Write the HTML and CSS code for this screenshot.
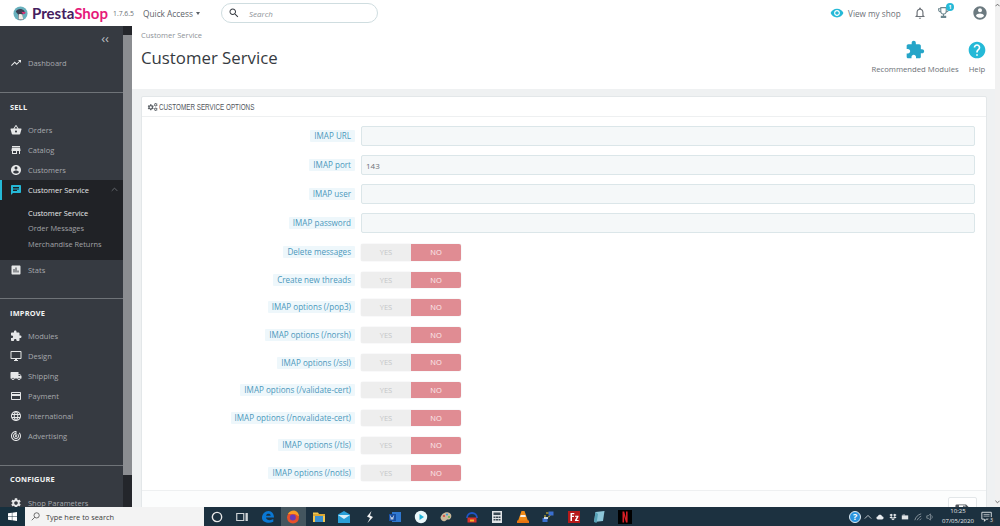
FILE: index.html
```html
<!DOCTYPE html>
<html lang="en">
<head>
<meta charset="utf-8">
<title>Customer Service</title>
<link rel="stylesheet" href="styles.css">
</head>
<body>
<svg class="defs" aria-hidden="true">
  <symbol id="i-trend" viewBox="0 0 24 24"><path d="M16 6l2.29 2.29-4.88 4.88-4-4L2 16.59 3.41 18l6-6 4 4 6.3-6.29L22 12V6z"/></symbol>
  <symbol id="i-basket" viewBox="0 0 24 24"><path d="M17.21 9l-4.38-6.56c-.19-.28-.51-.42-.83-.42-.32 0-.64.14-.83.43L6.79 9H2c-.55 0-1 .45-1 1 0 .09.01.18.04.27l2.54 9.27c.23.84 1 1.46 1.92 1.46h13c.92 0 1.69-.62 1.93-1.46l2.54-9.27L23 10c0-.55-.45-1-1-1h-4.79zM9 9l3-4.4L15 9H9zm3 8c-1.1 0-2-.9-2-2s.9-2 2-2 2 .9 2 2-.9 2-2 2z"/></symbol>
  <symbol id="i-store" viewBox="0 0 24 24"><path d="M20 4H4v2h16V4zm1 10v-2l-1-5H4l-1 5v2h1v6h10v-6h4v6h2v-6h1zm-9 4H6v-4h6v4z"/></symbol>
  <symbol id="i-account" viewBox="0 0 24 24"><path d="M12 2C6.48 2 2 6.48 2 12s4.48 10 10 10 10-4.48 10-10S17.52 2 12 2zm0 3c1.66 0 3 1.34 3 3s-1.34 3-3 3-3-1.34-3-3 1.34-3 3-3zm0 14.2c-2.5 0-4.71-1.28-6-3.22.03-1.99 4-3.08 6-3.08 1.99 0 5.97 1.09 6 3.08-1.29 1.94-3.5 3.22-6 3.22z"/></symbol>
  <symbol id="i-chat" viewBox="0 0 24 24"><path d="M20 2H4c-1.1 0-1.99.9-1.99 2L2 22l4-4h14c1.1 0 2-.9 2-2V4c0-1.1-.9-2-2-2zM6 9h12v2H6V9zm8 5H6v-2h8v2zm4-6H6V6h12v2z"/></symbol>
  <symbol id="i-stats" viewBox="0 0 24 24"><path d="M19 3H5c-1.1 0-2 .9-2 2v14c0 1.1.9 2 2 2h14c1.1 0 2-.9 2-2V5c0-1.1-.9-2-2-2zM9 17H7v-7h2v7zm4 0h-2V7h2v10zm4 0h-2v-4h2v4z"/></symbol>
  <symbol id="i-puzzle" viewBox="0 0 24 24"><path d="M20.5 11H19V7c0-1.1-.9-2-2-2h-4V3.5C13 2.12 11.88 1 10.5 1S8 2.12 8 3.5V5H4c-1.1 0-1.99.9-1.99 2v3.8H3.5c1.49 0 2.7 1.21 2.7 2.7s-1.21 2.7-2.7 2.7H2V20c0 1.1.9 2 2 2h3.8v-1.5c0-1.49 1.21-2.7 2.7-2.7 1.49 0 2.7 1.21 2.7 2.7V22H17c1.1 0 2-.9 2-2v-4h1.5c1.38 0 2.5-1.12 2.5-2.5S21.88 11 20.5 11z"/></symbol>
  <symbol id="i-desktop" viewBox="0 0 24 24"><path d="M21 2H3c-1.1 0-2 .9-2 2v12c0 1.1.9 2 2 2h7v2H8v2h8v-2h-2v-2h7c1.1 0 2-.9 2-2V4c0-1.1-.9-2-2-2zm0 14H3V4h18v12z"/></symbol>
  <symbol id="i-truck" viewBox="0 0 24 24"><path d="M20 8h-3V4H3c-1.1 0-2 .9-2 2v11h2c0 1.66 1.34 3 3 3s3-1.34 3-3h6c0 1.66 1.34 3 3 3s3-1.34 3-3h2v-5l-3-4zM6 18.5c-.83 0-1.5-.67-1.5-1.5s.67-1.5 1.5-1.5 1.5.67 1.5 1.5-.67 1.5-1.5 1.5zm13.5-9l1.96 2.5H17V9.5h2.5zm-1.5 9c-.83 0-1.5-.67-1.5-1.5s.67-1.5 1.5-1.5 1.5.67 1.5 1.5-.67 1.5-1.5 1.5z"/></symbol>
  <symbol id="i-card" viewBox="0 0 24 24"><path d="M20 4H4c-1.11 0-1.99.89-1.99 2L2 18c0 1.11.89 2 2 2h16c1.11 0 2-.89 2-2V6c0-1.11-.89-2-2-2zm0 14H4v-6h16v6zm0-10H4V6h16v2z"/></symbol>
  <symbol id="i-globe" viewBox="0 0 24 24"><path d="M11.99 2C6.47 2 2 6.48 2 12s4.47 10 9.99 10C17.52 22 22 17.52 22 12S17.52 2 11.99 2zm6.93 6h-2.95c-.32-1.25-.78-2.45-1.38-3.56 1.84.63 3.37 1.91 4.33 3.56zM12 4.04c.83 1.2 1.48 2.53 1.91 3.96h-3.82c.43-1.43 1.08-2.76 1.91-3.96zM4.26 14C4.1 13.36 4 12.69 4 12s.1-1.36.26-2h3.38c-.08.66-.14 1.32-.14 2 0 .68.06 1.34.14 2H4.26zm.82 2h2.95c.32 1.25.78 2.45 1.38 3.56-1.84-.63-3.37-1.9-4.33-3.56zm2.95-8H5.08c.96-1.66 2.49-2.93 4.33-3.56C8.81 5.55 8.35 6.75 8.03 8zM12 19.96c-.83-1.2-1.48-2.53-1.91-3.96h3.82c-.43 1.43-1.08 2.76-1.91 3.96zM14.34 14H9.66c-.09-.66-.16-1.32-.16-2 0-.68.07-1.35.16-2h4.68c.09.65.16 1.32.16 2 0 .68-.07 1.34-.16 2zm.25 5.56c.6-1.11 1.06-2.31 1.38-3.56h2.95c-.96 1.65-2.49 2.93-4.33 3.56zM16.36 14c.08-.66.14-1.32.14-2 0-.68-.06-1.34-.14-2h3.38c.16.64.26 1.31.26 2s-.1 1.36-.26 2h-3.38z"/></symbol>
  <symbol id="i-target" viewBox="0 0 24 24"><path d="M19.07 4.93l-1.41 1.41C19.1 7.79 20 9.79 20 12c0 4.42-3.58 8-8 8s-8-3.58-8-8c0-4.08 3.05-7.44 7-7.93v2.02C8.16 6.57 6 9.03 6 12c0 3.31 2.69 6 6 6s6-2.69 6-6c0-1.66-.67-3.16-1.76-4.24l-1.41 1.41C15.55 9.9 16 10.9 16 12c0 2.21-1.79 4-4 4s-4-1.79-4-4c0-1.86 1.28-3.41 3-3.86v2.14c-.6.35-1 .98-1 1.72 0 1.1.9 2 2 2s2-.9 2-2c0-.74-.4-1.38-1-1.72V2h-1C6.48 2 2 6.48 2 12s4.48 10 10 10 10-4.48 10-10c0-2.76-1.12-5.26-2.93-7.07z"/></symbol>
  <symbol id="i-gear" viewBox="0 0 24 24"><path d="M19.14 12.94c.04-.3.06-.61.06-.94 0-.32-.02-.64-.07-.94l2.03-1.58c.18-.14.23-.41.12-.61l-1.92-3.32c-.12-.22-.37-.29-.59-.22l-2.39.96c-.5-.38-1.03-.7-1.62-.94l-.36-2.54c-.04-.24-.24-.41-.48-.41h-3.84c-.24 0-.43.17-.47.41l-.36 2.54c-.59.24-1.13.57-1.62.94l-2.39-.96c-.22-.08-.47 0-.59.22L2.74 8.87c-.12.21-.08.47.12.61l2.03 1.58c-.05.3-.09.63-.09.94s.02.64.07.94l-2.03 1.58c-.18.14-.23.41-.12.61l1.92 3.32c.12.22.37.29.59.22l2.39-.96c.5.38 1.03.7 1.62.94l.36 2.54c.05.24.24.41.48.41h3.84c.24 0 .44-.17.47-.41l.36-2.54c.59-.24 1.13-.56 1.62-.94l2.39.96c.22.08.47 0 .59-.22l1.92-3.32c.12-.22.07-.47-.12-.61l-2.01-1.58zM12 15.6c-1.98 0-3.6-1.62-3.6-3.6s1.62-3.6 3.6-3.6 3.6 1.62 3.6 3.6-1.62 3.6-3.6 3.6z"/></symbol>
  <symbol id="i-eye" viewBox="0 0 24 24"><path d="M12 4.5C7 4.5 2.73 7.61 1 12c1.73 4.39 6 7.5 11 7.5s9.27-3.11 11-7.5c-1.73-4.39-6-7.5-11-7.5zM12 17c-2.76 0-5-2.24-5-5s2.24-5 5-5 5 2.24 5 5-2.24 5-5 5zm0-8c-1.66 0-3 1.34-3 3s1.34 3 3 3 3-1.34 3-3-1.34-3-3-3z"/></symbol>
  <symbol id="i-bell" viewBox="0 0 24 24"><path d="M12 22c1.1 0 2-.9 2-2h-4c0 1.1.9 2 2 2zm6-6v-5c0-3.07-1.63-5.64-4.5-6.32V4c0-.83-.67-1.5-1.5-1.5s-1.5.67-1.5 1.5v.68C7.64 5.36 6 7.92 6 11v5l-2 2v1h16v-1l-2-2zm-2 1H8v-6c0-2.48 1.51-4.5 4-4.5s4 2.02 4 4.5v6z"/></symbol>
  <symbol id="i-help" viewBox="0 0 24 24"><path d="M12 2C6.48 2 2 6.48 2 12s4.48 10 10 10 10-4.48 10-10S17.52 2 12 2zm1 17h-2v-2h2v2zm2.07-7.75l-.9.92C13.45 12.9 13 13.5 13 15h-2v-.5c0-1.1.45-2.1 1.17-2.83l1.24-1.26c.37-.36.59-.86.59-1.41 0-1.1-.9-2-2-2s-2 .9-2 2H8c0-2.21 1.79-4 4-4s4 1.79 4 4c0 .88-.36 1.68-.93 2.25z"/></symbol>
  <symbol id="i-search" viewBox="0 0 24 24"><path d="M15.5 14h-.79l-.28-.27C15.41 12.59 16 11.11 16 9.5 16 5.91 13.09 3 9.5 3S3 5.91 3 9.5 5.91 16 9.5 16c1.61 0 3.09-.59 4.23-1.57l.27.28v.79l5 4.99L20.49 19l-4.99-5zm-6 0C7.01 14 5 11.99 5 9.5S7.01 5 9.5 5 14 7.01 14 9.5 11.99 14 9.5 14z"/></symbol>
  <symbol id="i-trophy" viewBox="0 0 24 24"><path d="M6 2h12v2h4v3c0 2.5-1.8 4.5-4.3 4.9A6 6 0 0 1 13 15.9V18h4v4H7v-4h4v-2.100A6 6 0 0 1 6.300 11.900C3.800 11.500 2 9.500 2 7V4h4zM4 6v1c0 1.300.8 2.400 2 2.800V6zm14 0v3.800c1.200-.4 2-1.500 2-2.800V6zM8 4v6a4 4 0 0 0 8 0V4z"/></symbol>
</svg>

<div class="screen">
  <div class="window">
    <div class="window-body">
      <header class="topbar">
        <div class="logo">
          <svg class="logo-mark" viewBox="0 0 16 16"><circle cx="8" cy="8" r="7.500" fill="#68b0bd"/><path d="M3 6c1-3 6-4 9-1l1 3-3 .5 1 6.500H6L5.500 9z" fill="#3c3f52"/><path d="M9 6l5 1-3 2z" fill="#ea2d78"/><path d="M6 9c1.500-1 3-.5 4 0l1 5.500H6z" fill="#f2ede6"/></svg>
          <span class="logo-text"><span class="logo-a">Presta</span><span class="logo-b">Shop</span></span>
        </div>
        <span class="version">1.7.6.5</span>
        <span class="quick">Quick Access<span class="caret"></span></span>
        <div class="searchbox">
          <svg class="ic-search"><use href="#i-search"/></svg>
          <span class="search-ph">Search</span>
        </div>
        <div class="top-right">
          <svg class="ic-eye"><use href="#i-eye"/></svg>
          <span class="view-shop">View my shop</span>
          <svg class="ic-bell"><use href="#i-bell"/></svg>
          <span class="trophy"><svg class="ic-trophy"><use href="#i-trophy"/></svg><span class="badge">1</span></span>
          <svg class="ic-user"><use href="#i-account"/></svg>
        </div>
      </header>
      <div class="below">
        <nav class="sidebar">
          <div class="collapse">&#8249;&#8249;</div>
          <a class="item"><svg class="ic"><use href="#i-trend"/></svg>Dashboard</a>
          <div class="section">
            <div class="section-title">SELL</div>
            <a class="item"><svg class="ic"><use href="#i-basket"/></svg>Orders</a>
            <a class="item"><svg class="ic"><use href="#i-store"/></svg>Catalog</a>
            <a class="item"><svg class="ic"><use href="#i-account"/></svg>Customers</a>
            <div class="open-group">
              <a class="item item-active"><svg class="ic"><use href="#i-chat"/></svg>Customer Service<svg class="chev" viewBox="0 0 10 6"><path d="M1 5l4-4 4 4" fill="none" stroke="currentColor" stroke-width="1.200"/></svg></a>
              <a class="sub sub-on">Customer Service</a>
              <a class="sub">Order Messages</a>
              <a class="sub">Merchandise Returns</a>
            </div>
            <a class="item"><svg class="ic"><use href="#i-stats"/></svg>Stats</a>
          </div>
          <div class="section">
            <div class="section-title">IMPROVE</div>
            <a class="item"><svg class="ic"><use href="#i-puzzle"/></svg>Modules</a>
            <a class="item"><svg class="ic"><use href="#i-desktop"/></svg>Design</a>
            <a class="item"><svg class="ic"><use href="#i-truck"/></svg>Shipping</a>
            <a class="item"><svg class="ic"><use href="#i-card"/></svg>Payment</a>
            <a class="item"><svg class="ic"><use href="#i-globe"/></svg>International</a>
            <a class="item"><svg class="ic"><use href="#i-target"/></svg>Advertising</a>
          </div>
          <div class="section">
            <div class="section-title">CONFIGURE</div>
            <a class="item"><svg class="ic"><use href="#i-gear"/></svg>Shop Parameters</a>
          </div>
        </nav>
        <div class="side-scroll"><div class="side-thumb"></div></div>
        <main class="main">
          <div class="page-head">
            <div class="page-title-wrap">
              <div class="crumb">Customer Service</div>
              <h1 class="title">Customer Service</h1>
            </div>
            <div class="toolbar">
              <a class="tool tool-rec"><svg class="ic-tool"><use href="#i-puzzle"/></svg><span>Recommended Modules</span></a>
              <a class="tool tool-help"><svg class="ic-tool ic-tool-help"><use href="#i-help"/></svg><span>Help</span></a>
            </div>
          </div>
          <section class="card">
            <div class="card-head">
              <svg class="ic-cogs" viewBox="0 0 24 18"><use href="#i-gear" x="0" y="2" width="15" height="15"/><use href="#i-gear" x="13" y="0" width="9" height="9"/><use href="#i-gear" x="13" y="9" width="9" height="9"/></svg>
              <span class="card-title">CUSTOMER SERVICE OPTIONS</span>
            </div>
            <div class="form">
              <div class="row row-input"><label class="lab"><span>IMAP URL</span></label><input class="inp" type="text"></div>
              <div class="row row-input"><label class="lab"><span>IMAP port</span></label><input class="inp" type="text" value="143"></div>
              <div class="row row-input"><label class="lab"><span>IMAP user</span></label><input class="inp" type="text"></div>
              <div class="row row-input"><label class="lab"><span>IMAP password</span></label><input class="inp" type="text"></div>
              <div class="row row-switch"><label class="lab"><span>Delete messages</span></label><div class="switch"><span class="yes">YES</span><span class="no">NO</span></div></div>
              <div class="row row-switch"><label class="lab"><span>Create new threads</span></label><div class="switch"><span class="yes">YES</span><span class="no">NO</span></div></div>
              <div class="row row-switch"><label class="lab"><span>IMAP options (/pop3)</span></label><div class="switch"><span class="yes">YES</span><span class="no">NO</span></div></div>
              <div class="row row-switch"><label class="lab"><span>IMAP options (/norsh)</span></label><div class="switch"><span class="yes">YES</span><span class="no">NO</span></div></div>
              <div class="row row-switch"><label class="lab"><span>IMAP options (/ssl)</span></label><div class="switch"><span class="yes">YES</span><span class="no">NO</span></div></div>
              <div class="row row-switch"><label class="lab"><span>IMAP options (/validate-cert)</span></label><div class="switch"><span class="yes">YES</span><span class="no">NO</span></div></div>
              <div class="row row-switch"><label class="lab"><span>IMAP options (/novalidate-cert)</span></label><div class="switch"><span class="yes">YES</span><span class="no">NO</span></div></div>
              <div class="row row-switch"><label class="lab"><span>IMAP options (/tls)</span></label><div class="switch"><span class="yes">YES</span><span class="no">NO</span></div></div>
              <div class="row row-switch"><label class="lab"><span>IMAP options (/notls)</span></label><div class="switch"><span class="yes">YES</span><span class="no">NO</span></div></div>
            </div>
            <div class="card-foot">
              <div class="save"><svg class="ic-save" viewBox="0 0 24 24"><path d="M4 2h13l5 5v15H2V4a2 2 0 0 1 2-2zm3 1v6h9V3zm6 1h2v4h-2z"/></svg></div>
            </div>
          </section>
        </main>
      </div>
    </div>
    <div class="page-scroll"><svg class="page-up" viewBox="0 0 6 4"><path d="M.5 3.500L3 1l2.500 2.500" fill="none" stroke="#555"/></svg><svg class="page-down" viewBox="0 0 6 4"><path d="M.5.5L3 3 5.500.5" fill="none" stroke="#555"/></svg></div>
  </div>

  <footer class="taskbar">
    <div class="start"><svg class="win" viewBox="0 0 10 10"><path d="M0 1.400L4.300.8v3.900H0zM4.800.7L10 0v4.700H4.800zM0 5.200h4.300v3.900L0 8.500zM4.800 5.200H10V10l-5.200-.7z" fill="#fff"/></svg></div>
    <div class="ts-search"><svg class="ts-lens" viewBox="0 0 12 12"><circle cx="7.500" cy="4.500" r="3.500" fill="none" stroke="#444"/><path d="M5 7l-4 4" stroke="#444"/></svg><span>Type here to search</span></div>
    <div class="apps">
      <span class="app"><svg viewBox="0 0 12 12"><circle cx="6" cy="6" r="4" fill="none" stroke="#e8e8e8" stroke-width="1.200"/></svg></span>
      <span class="app"><svg viewBox="0 0 12 12"><path d="M1.500 3h6v6h-6zM9.500 3h1v2.500h-1zM9.500 6.500h1V9h-1z" fill="none" stroke="#d0d5d8"/></svg></span>
      <span class="app"><svg viewBox="0 0 14 14"><path d="M1 8c0-4 3-7 6.500-7S13 4 13 7.500H5c.2 2.800 4.500 3.500 7.300 1.500v2.800C8 14 1 12.500 1 8zm4.100-2.300h4.600C9.500 3.200 5.500 3.200 5.100 5.700z" fill="#0a78d4"/></svg></span>
      <span class="app app-on"><svg viewBox="0 0 14 14"><circle cx="7" cy="7.500" r="6" fill="#e8502a"/><path d="M2 4c1-2 3-3.500 6-3.500 3 .5 5 3 5 6L9 4z" fill="#fb9a22"/><circle cx="6.800" cy="7.500" r="3" fill="#6a3bb8"/></svg></span>
      <span class="app"><svg viewBox="0 0 14 14"><path d="M1 2.500h5l1 1.500h6v8H1z" fill="#f2c54c"/><path d="M3 6h8v6H3z" fill="#3a8fd0"/><path d="M1 4h12v2H1z" fill="#dba735"/></svg></span>
      <span class="app"><svg viewBox="0 0 14 14"><path d="M1 4.500L7 1l6 3.500V13H1z" fill="#2a9fd8"/><path d="M1 5l6 4 6-4" fill="#d8eef8"/></svg></span>
      <span class="app"><svg viewBox="0 0 14 14"><path d="M8.500 1L4 6.500l3 1.500-2.500 5L10 7 7 5.500z" fill="#f2f2f2"/></svg></span>
      <span class="app"><svg viewBox="0 0 14 14"><path d="M4 2h9v10H4z" fill="#2f78d0"/><path d="M1 4h7v7H1z" fill="#174ea0"/><path d="M2.300 5.500l.9 4 .8-2.500.8 2.500.9-4" fill="none" stroke="#fff" stroke-width=".6"/></svg></span>
      <span class="app"><svg viewBox="0 0 14 14"><circle cx="7" cy="7" r="6.200" fill="#eaf8fb"/><path d="M5.500 4l4.500 3-4.500 3z" fill="#1fb3d8"/></svg></span>
      <span class="app"><svg viewBox="0 0 14 14"><path d="M1.500 8C2 4 6 1.500 9.500 2.500s3.500 5 1.500 6.500-2-.5-3.500 1S3 12.500 1.500 8z" fill="#c9b89a"/><circle cx="5" cy="6" r="1.100" fill="#d9443a"/><circle cx="8" cy="4.500" r="1.100" fill="#3a9ad9"/><circle cx="10" cy="7" r="1" fill="#5db84a"/></svg></span>
      <span class="app"><svg viewBox="0 0 14 14"><path d="M2 8a5 5 0 0 1 10 0" fill="none" stroke="#1f55c8" stroke-width="1.800"/><path d="M2.500 7.500h9v5h-9z" fill="#d8322c"/><path d="M5 9.500h4v2H5z" fill="#f2b72c"/></svg></span>
      <span class="app"><svg viewBox="0 0 12 14"><rect x="1" y="1" width="10" height="12" fill="#dfe3e6"/><rect x="2.500" y="2.500" width="7" height="2.500" fill="#3a4a55"/><path d="M2.500 6.500h2v1.500h-2zM5 6.500h2v1.500H5zM7.500 6.500h2v1.500h-2zM2.500 9h2v1.500h-2zM5 9h2v1.500H5zM7.500 9h2v1.500h-2z" fill="#3a4a55"/></svg></span>
      <span class="app"><svg viewBox="0 0 14 14"><path d="M5.500 1h3l3.500 10H2z" fill="#f08a16"/><path d="M4.700 5h4.600l.6 2H4.100z" fill="#f6f1e8"/><path d="M1 10.500h12V13H1z" fill="#e8730f"/></svg></span>
      <span class="app"><svg viewBox="0 0 14 14"><path d="M7.500 1.500h5v4h-5zM1.500 8h5v4h-5z" fill="#3a6fd0"/><path d="M5 3h2.500M4 5v3M9 5.500l-2 2" stroke="#e8c52c"/><path d="M3 7h4v2H3z" fill="#c8d8ea"/></svg></span>
      <span class="app"><svg viewBox="0 0 14 14"><rect x="1" y="1" width="12" height="12" fill="#b61a1a"/><path d="M3.500 3h3.800v1.300H5v1.500h2v1.300H5V11H3.500zM8 5.800h3.500v1L9.700 10h1.900v1H8v-1l1.800-3.200H8z" fill="#fff"/></svg></span>
      <span class="app"><svg viewBox="0 0 14 14"><path d="M3.500 2l9-1-1.500 10-9 1z" fill="#8cc6d8"/><path d="M3.500 2L6 4l-1.500 9-2.500-1z" fill="#55a0b5"/></svg></span>
      <span class="app"><svg viewBox="0 0 14 14"><rect width="14" height="14" fill="#000"/><path d="M4.500 1.500h1.700L8 8V1.500h1.600v11H8L6.100 6v6.500H4.500z" fill="#d81f26"/></svg></span>
    </div>
    <div class="tray">
      <span class="tray-help">?</span>
      <svg class="tray-ic" viewBox="0 0 10 10"><path d="M1 7l4-4 4 4" fill="none" stroke="#dfe3e6"/></svg>
      <svg class="tray-ic" viewBox="0 0 10 10"><path d="M2.500 8a2 2 0 0 1 0-4c.5-2 4-2.500 5 0a2 2 0 0 1 0 4z" fill="#e8ecef"/></svg>
      <svg class="tray-ic" viewBox="0 0 10 10"><path d="M2.800 1L5 2.500 2.800 4 .5 2.500zM7.200 1l2.300 1.500L7.200 4 5 2.500zM2.800 4L5 5.500 2.800 7 .5 5.500zM7.200 4l2.300 1.500L7.200 7 5 5.500zM2.800 7.500L5 6.500l2.200 1L5 9z" fill="#e8ecef"/></svg>
      <svg class="tray-ic" viewBox="0 0 10 10"><path d="M1 3h8v5H1z" fill="#dfe3e6"/><path d="M2 2h3v1H2z" fill="#dfe3e6"/></svg>
      <svg class="tray-ic" viewBox="0 0 10 10"><path d="M1 9c1-4 4-7 8-8M4 9c1-2 2.500-4 5-5M7 9l2-2" fill="none" stroke="#9aa5ac"/></svg>
      <svg class="tray-ic" viewBox="0 0 10 10"><path d="M1 3.500h2L5.500 1v8L3 6.500H1zM7 3c1 1 1 3 0 4" fill="none" stroke="#aab3b9" stroke-width=".8"/></svg>
      <div class="clock"><span>10:25</span><span>07/05/2020</span></div>
      <span class="notif"><svg viewBox="0 0 14 13"><path d="M1 1h11v8H6l-2 2.500V9H1z" fill="none" stroke="#f0f2f3"/><path d="M3 3.500h7M3 5.500h7" stroke="#f0f2f3" stroke-width=".7"/></svg><span class="notif-n">3</span></span>
    </div>
  </footer>
</div>
</body>
</html>
```
FILE: styles.css
```css
* { box-sizing: border-box; }
html, body { margin: 0; padding: 0; height: 100%; overflow: hidden; background: #fff; }
body { font-family: "Open Sans", "Noto Sans", sans-serif; color: #363a41; }
.defs { display: none; }
a { display: block; }

.screen { width: 1000px; height: 526px; display: flex; flex-direction: column; overflow: hidden; }
.window { flex: 1; min-height: 0; display: flex; }
.window-body { flex: 1; min-width: 0; display: flex; flex-direction: column; }

/* Top bar */
.topbar { height: 26px; flex: none; display: flex; align-items: center; background: #fff; }
.logo { width: 113px; flex: none; display: flex; align-items: center; padding-left: 13px; }
.logo-mark { width: 15px; height: 15px; flex: none; }
.logo-text { margin-left: 4px; font-family: Lato, sans-serif; font-weight: 700; font-size: 15px; line-height: 1; white-space: nowrap; }
.logo-a { color: #45205f; }
.logo-b { color: #e6197a; }
.version { width: 30px; flex: none; font-size: 6.800px; color: #6c7177; }
.quick { font-size: 8.300px; color: #5c6168; display: flex; align-items: center; width: 78px; flex: none; white-space: nowrap; }
.caret { margin-left: 3px; border: 2.500px solid transparent; border-top: 3px solid #5c6168; border-bottom: 0; }
.searchbox { width: 157px; height: 20px; border: 1px solid #cfdde0; border-radius: 10px; display: flex; align-items: center; padding-left: 6px; }
.ic-search { width: 12px; height: 12px; fill: #363a41; }
.search-ph { margin-left: 9px; font-size: 8px; font-style: italic; color: #8d9297; }
.top-right { margin-left: auto; display: flex; align-items: center; }
.ic-eye { width: 14px; height: 14px; fill: #25b9d7; }
.view-shop { margin-left: 4px; font-size: 8.200px; color: #6c7177; width: 65px; white-space: nowrap; }
.ic-bell { width: 14px; height: 14px; fill: #6c7177; }
.trophy { position: relative; display: block; width: 14px; height: 14px; margin-left: 10px; }
.ic-trophy { width: 13px; height: 13px; fill: #6c868e; display: block; }
.badge { position: absolute; top: -3px; right: -3px; width: 8px; height: 8px; border-radius: 50%; background: #25b9d7; color: #fff; font-size: 5.500px; line-height: 8px; text-align: center; font-weight: 700; }
.ic-user { width: 16px; height: 16px; fill: #6c7a80; margin-left: 21px; margin-right: 7px; }

.below { flex: 1; min-height: 0; display: flex; }

/* Sidebar */
.sidebar { width: 123px; flex: none; background: #363a41; overflow: hidden; color: #a6a9ad; }
.collapse { height: 27px; padding: 2px 14px 0 0; text-align: right; color: #bcbfc2; font-size: 13px; line-height: 20px; }
.item { height: 20px; display: flex; align-items: center; padding-left: 10px; font-size: 7.500px; color: #a6a9ad; white-space: nowrap; }
.ic { width: 12px; height: 12px; fill: #e6e7e8; margin-right: 6px; flex: none; }
.section { margin-top: 18.500px; border-top: 1px solid #6f7378; }
.section-title { height: 27px; padding: 8px 0 0 10px; font-size: 7.400px; line-height: 12px; font-weight: 700; color: #f2f3f3; letter-spacing: .2px; }
.section:last-child .section-title { padding-top: 7px; }
.open-group { height: 80px; background: #202226; }
.item-active { color: #e4e5e6; border-left: 2px solid #25b9d7; padding-left: 8px; }
.item-active .ic { fill: #25b9d7; }
.chev { width: 7px; height: 5px; margin-left: auto; margin-right: 5px; color: #6f7378; }
.sub { height: 15.500px; line-height: 15.500px; padding-left: 28px; font-size: 7.400px; color: #a0a3a7; white-space: nowrap; }
.item-active + .sub { margin-top: 6px; }
.sub-on { color: #e9eaea; }

.side-scroll { width: 9px; flex: none; background: #24262b; padding: 9px 0 32px; }
.side-thumb { height: 100%; background: #8b8d91; }

/* Main */
.main { flex: 1; min-width: 0; background: #eff1f2; overflow: hidden; }
.page-head { height: 63px; background: #fff; display: flex; justify-content: space-between; padding-left: 9px; }
.crumb { font-size: 7.500px; line-height: 10px; padding-top: 4px; color: #8d9297; }
.title { margin: 5px 0 0; font-size: 16.800px; line-height: 26px; font-weight: 400; color: #363a41; }
.toolbar { display: flex; align-items: flex-start; padding-top: 14px; }
.tool { display: flex; flex-direction: column; align-items: center; font-size: 7.700px; line-height: 12px; color: #6c7177; white-space: nowrap; }
.tool-rec { width: 86px; margin-right: 11px; }
.tool-help { width: 16px; margin-right: 10px; }
.ic-tool { width: 20px; height: 20px; fill: #25a5c8; margin-bottom: 3px; }
.ic-tool-help { fill: #25b9d7; flex: none; }

.card { margin: 7px 8px 0 9px; background: #fff; border: 1px solid #e3e7e9; border-radius: 2px; }
.card-head { height: 20px; display: flex; align-items: center; padding-left: 5px; border-bottom: 1px solid #eef0f1; }
.ic-cogs { width: 12px; height: 10px; fill: #5b6066; flex: none; }
.card-title { font-family: "Liberation Sans", sans-serif; font-size: 9px; color: #50555b; white-space: nowrap; transform: scaleX(.7); transform-origin: left center; }
.form { padding-top: 9px; height: 374px; border-bottom: 1px solid #eef0f1; }
.row { display: flex; align-items: center; }
.row-input { height: 20px; margin-bottom: 9px; }
.row-switch { height: 16.500px; margin-bottom: 11.100px; }
.row-input:nth-child(4) { margin-bottom: 11px; }
.lab { width: 213px; flex: none; margin-right: 6px; text-align: right; font-size: 8.100px; line-height: 12px; color: #4b98bb; white-space: nowrap; }
.lab span { display: inline-block; background: #eef7fb; padding: 0 4px; border-radius: 1px; }
.inp { width: 614px; height: 20px; margin: 0; padding: 0 4px; background: #f5f8f9; border: 1px solid #dbe6e9; border-radius: 2px; font-family: inherit; font-size: 8px; color: #6c7177; outline: none; }
.switch { width: 100px; height: 16.500px; display: flex; border-radius: 2px; overflow: hidden; box-shadow: 0 0 1px #bfc3c6; font-size: 7.500px; line-height: 16.500px; text-align: center; }
.yes { flex: 1; background: #eee; color: #c4c6c8; }
.no { flex: 1; background: #e08c93; color: #fbeced; }
.card-foot { height: 40px; background: #fcfdfd; padding: 6px 9px 0 0; display: flex; justify-content: flex-end; }
.save { width: 29px; height: 26px; background: #fff; border: 1px solid #e3e7e9; border-radius: 2px; display: flex; justify-content: center; padding-top: 5px; }
.ic-save { width: 17px; height: 17px; fill: #4f545a; }

.page-scroll { width: 5px; flex: none; background: #f1f1f1; display: flex; flex-direction: column; justify-content: space-between; align-items: center; padding: 3px 0; }
.page-up, .page-down { width: 5px; height: 4px; }

/* Taskbar */
.taskbar { height: 19px; flex: none; background: #1c3140; display: flex; align-items: stretch; }
.start { width: 25px; display: flex; align-items: center; justify-content: center; background: #17303e; }
.win { width: 9px; height: 9px; }
.ts-search { width: 179px; background: #f3f3f3; display: flex; align-items: center; padding-left: 6px; font-size: 7.400px; color: #3c3c3c; }
.ts-lens { width: 9px; height: 9px; margin-right: 6px; }
.apps { display: flex; }
.app { width: 25.500px; display: flex; align-items: center; justify-content: center; }
.app svg { width: 14px; height: 14px; }
.app-on { background: #44565f; }
.tray { margin-left: auto; display: flex; align-items: center; color: #e8ebed; }
.tray-help { width: 12px; height: 12px; border-radius: 50%; background: #2a93de; border: 1px solid #dfeaf2; color: #fff; font-size: 9px; font-weight: 700; line-height: 10px; text-align: center; }
.tray-ic { width: 8px; height: 8px; margin: 0 2.250px; flex: none; }
.clock { width: 42px; margin-left: .750px; margin-right: 2px; display: flex; flex-direction: column; align-items: center; font-size: 6px; line-height: 9.500px; white-space: nowrap; }
.notif { position: relative; width: 12px; height: 12px; margin-right: 7px; }
.notif svg { width: 12px; height: 12px; display: block; }
.notif-n { position: absolute; right: -2px; bottom: -1px; width: 7px; height: 7px; border-radius: 50%; background: #26333d; font-size: 5px; line-height: 7px; text-align: center; }
```
